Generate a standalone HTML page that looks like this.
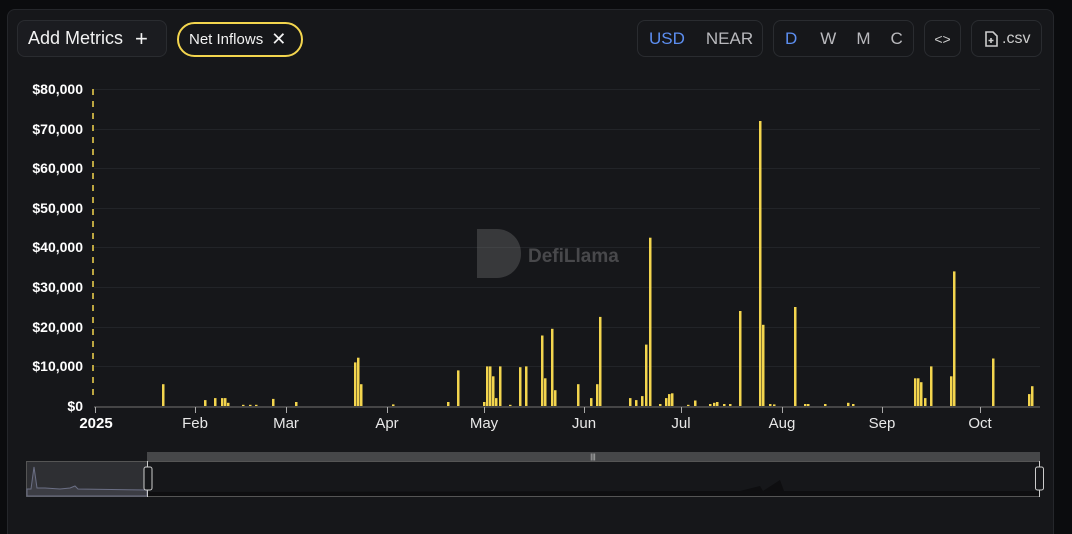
<!DOCTYPE html>
<html style="width:1072px;height:534px;overflow:hidden"><head><meta charset="utf-8"><style>
*{margin:0;padding:0;box-sizing:border-box}
body{width:1072px;height:534px;background:#0b0c0e;font-family:"Liberation Sans",sans-serif;overflow:hidden;position:relative}
.panel{position:absolute;left:7px;top:9px;width:1047px;height:525px;background:#16171a;border:1px solid #25272b;border-bottom:none;border-radius:8px 8px 0 0}
.btn{position:absolute;top:20px;height:37px;border:1px solid #2a2c30;border-radius:8px;background:#1b1c20;color:#fff;font-size:18px;display:flex;align-items:center}
.t{color:#b9b9bd}
</style></head><body>
<div class="panel"></div>
<div class="btn" style="left:17px;width:150px;padding-left:10px;color:#f2f2f2">Add Metrics<span style="margin-left:12px;font-size:22px;font-weight:300">+</span></div>
<div class="btn" style="left:177px;width:126px;height:35px;top:22px;border:2px solid #f3d54e;border-radius:18px;background:transparent;padding-left:10px;font-size:15px;color:#f2f2f2">Net Inflows<span style="margin-left:8px;font-size:18px">✕</span></div>
<div class="btn" style="left:637px;width:126px;background:transparent;font-size:17px"><span style="margin-left:11px;color:#5c8ef0">USD</span><span class="t" style="margin-left:21px">NEAR</span></div>
<div class="btn" style="left:773px;width:141px;background:transparent;font-size:17px"><span style="margin-left:11px;color:#5c8ef0">D</span><span class="t" style="margin-left:23px">W</span><span class="t" style="margin-left:20px">M</span><span class="t" style="margin-left:20px">C</span></div>
<div class="btn" style="left:924px;width:37px;background:transparent;justify-content:center;font-size:14px;color:#ccc">&lt;&gt;</div>
<div class="btn" style="left:971px;width:71px;background:transparent;font-size:16px;color:#ccc"><svg width="14" height="16" style="margin-left:12px;margin-right:4px" viewBox="0 0 14 16"><path d="M2 1h7l4 4v10H2z" fill="none" stroke="#ccc" stroke-width="1.6"/><path d="M7 7v5M4.5 9.5h5" stroke="#ccc" stroke-width="1.6"/></svg>.csv</div>
<svg width="1072" height="534" style="position:absolute;left:0;top:0" font-family="Liberation Sans,sans-serif">
<g stroke="#222428" stroke-width="1">
<line x1="94" x2="1040" y1="89.5" y2="89.5"/><line x1="94" x2="1040" y1="129.5" y2="129.5"/><line x1="94" x2="1040" y1="168.5" y2="168.5"/><line x1="94" x2="1040" y1="208.5" y2="208.5"/><line x1="94" x2="1040" y1="247.5" y2="247.5"/><line x1="94" x2="1040" y1="287.5" y2="287.5"/><line x1="94" x2="1040" y1="327.5" y2="327.5"/><line x1="94" x2="1040" y1="366.5" y2="366.5"/>
</g>
<line x1="94" x2="1040" y1="407" y2="407" stroke="#555" stroke-width="1.5"/>
<line x1="93" x2="93" y1="89" y2="400" stroke="#f3d54e" stroke-width="1.5" stroke-dasharray="6 6"/>
<g fill="#fff" font-size="14" text-anchor="end" font-weight="bold">
<text x="83" y="94">$80,000</text><text x="83" y="134">$70,000</text><text x="83" y="173">$60,000</text><text x="83" y="213">$50,000</text><text x="83" y="252">$40,000</text><text x="83" y="292">$30,000</text><text x="83" y="332">$20,000</text><text x="83" y="371">$10,000</text><text x="83" y="411">$0</text>
</g>
<g stroke="#aaa"><line x1="95.5" x2="95.5" y1="407" y2="413"/><line x1="195.5" x2="195.5" y1="407" y2="413"/><line x1="286.5" x2="286.5" y1="407" y2="413"/><line x1="387.5" x2="387.5" y1="407" y2="413"/><line x1="484.5" x2="484.5" y1="407" y2="413"/><line x1="584.5" x2="584.5" y1="407" y2="413"/><line x1="681.5" x2="681.5" y1="407" y2="413"/><line x1="782.5" x2="782.5" y1="407" y2="413"/><line x1="882.5" x2="882.5" y1="407" y2="413"/><line x1="980.5" x2="980.5" y1="407" y2="413"/></g>
<g fill="#e8e8e8" font-size="15" text-anchor="middle">
<text x="96" y="428" font-weight="bold" fill="#fff">2025</text><text x="195" y="428">Feb</text><text x="286" y="428">Mar</text><text x="387" y="428">Apr</text><text x="484" y="428">May</text><text x="584" y="428">Jun</text><text x="681" y="428">Jul</text><text x="782" y="428">Aug</text><text x="882" y="428">Sep</text><text x="980" y="428">Oct</text>
</g>
<g opacity="0.3">
<path d="M477 229h20a24 24 0 0 1 24 24v1a24 24 0 0 1 -24 24h-20z" fill="#888"/>
<text x="528" y="262" font-size="19" font-weight="bold" fill="#bbb">DefiLlama</text>
</g>
<g fill="#f3d54e" transform="translate(0,406) scale(1,-1)">
<rect x="162" width="2.5" height="21.8"/><rect x="204" width="2.5" height="5.9"/><rect x="214" width="2.5" height="7.9"/><rect x="221" width="2.5" height="7.9"/><rect x="224" width="2.5" height="7.9"/><rect x="227" width="2.5" height="3.2"/><rect x="242" width="2.5" height="1.2"/><rect x="249" width="2.5" height="1.2"/><rect x="255" width="2.5" height="1.2"/><rect x="272" width="2.5" height="7.1"/><rect x="295" width="2.5" height="4"/>
<rect x="354" width="2.5" height="43.6"/><rect x="357" width="2.5" height="48.3"/><rect x="360" width="2.5" height="21.8"/><rect x="392" width="2.5" height="1.6"/><rect x="447" width="2.5" height="4"/><rect x="457" width="2.5" height="35.6"/>
<rect x="483" width="2.5" height="4"/><rect x="486" width="2.5" height="39.6"/><rect x="489" width="2.5" height="39.6"/><rect x="492" width="2.5" height="29.7"/><rect x="495" width="2.5" height="7.9"/><rect x="499" width="2.5" height="39.6"/><rect x="509" width="2.5" height="1.2"/><rect x="519" width="2.5" height="38.8"/><rect x="525" width="2.5" height="39.6"/>
<rect x="541" width="2.5" height="70.5"/><rect x="544" width="2.5" height="27.7"/><rect x="551" width="2.5" height="77.2"/><rect x="554" width="2.5" height="15.8"/><rect x="577" width="2.5" height="21.8"/><rect x="590" width="2.5" height="7.9"/><rect x="596" width="2.5" height="21.8"/><rect x="599" width="2.5" height="89.1"/>
<rect x="629" width="2.5" height="7.9"/><rect x="635" width="2.5" height="5.9"/><rect x="641" width="2.5" height="9.9"/><rect x="645" width="2.5" height="61.4"/><rect x="649" width="2.5" height="168.3"/><rect x="659" width="2.5" height="2"/><rect x="665" width="2.5" height="7.9"/><rect x="668" width="2.5" height="11.9"/><rect x="671" width="2.5" height="12.7"/><rect x="687" width="2.5" height="1.2"/><rect x="694" width="2.5" height="5.5"/>
<rect x="709" width="2.5" height="2"/><rect x="713" width="2.5" height="3.2"/><rect x="716" width="2.5" height="4"/><rect x="723" width="2.5" height="2"/><rect x="729" width="2.5" height="2"/><rect x="739" width="2.5" height="95"/><rect x="759" width="2.5" height="285"/><rect x="762" width="2.5" height="81.2"/><rect x="769" width="2.5" height="2"/><rect x="773" width="2.5" height="1.6"/><rect x="794" width="2.5" height="99"/><rect x="804" width="2.5" height="2"/><rect x="807" width="2.5" height="2"/><rect x="824" width="2.5" height="2"/><rect x="847" width="2.5" height="3.2"/><rect x="852" width="2.5" height="2"/>
<rect x="914" width="2.5" height="27.7"/><rect x="917" width="2.5" height="27.7"/><rect x="920" width="2.5" height="23.8"/><rect x="924" width="2.5" height="7.9"/><rect x="930" width="2.5" height="39.6"/><rect x="950" width="2.5" height="29.7"/><rect x="953" width="2.5" height="134.6"/><rect x="992" width="2.5" height="47.5"/><rect x="1028" width="2.5" height="11.9"/><rect x="1031" width="2.5" height="19.8"/>
</g>
<rect x="147" y="452" width="893" height="9" fill="#464749"/>
<text x="593" y="459" font-size="7" fill="#ddd" text-anchor="middle">|||</text>
<rect x="26.5" y="461.5" width="1013" height="35" fill="none" stroke="#555"/>
<rect x="27" y="462" width="120" height="34" fill="#2e2f33"/>
<path d="M27 489 L31 489 L34 467 L37 488 L45 488 L60 489 L70 488 L75 486 L78 489 L147 490 L147 496 L27 496Z" fill="#3c3d44" stroke="#6b6f85" stroke-width="1"/>
<path d="M147 492 L740 491 L760 486 L763 491 L780 480 L784 491 L1039 491 L1039 496 L147 496Z" fill="#0e0e10"/>
<line x1="147.5" x2="147.5" y1="461" y2="497" stroke="#ccc"/>
<rect x="144" y="467" width="8" height="23" rx="2" fill="#16171a" stroke="#ccc"/>
<line x1="1039.5" x2="1039.5" y1="461" y2="497" stroke="#ccc"/>
<rect x="1035.5" y="467" width="8" height="23" rx="2" fill="#16171a" stroke="#ccc"/>
</svg>
</body></html>
